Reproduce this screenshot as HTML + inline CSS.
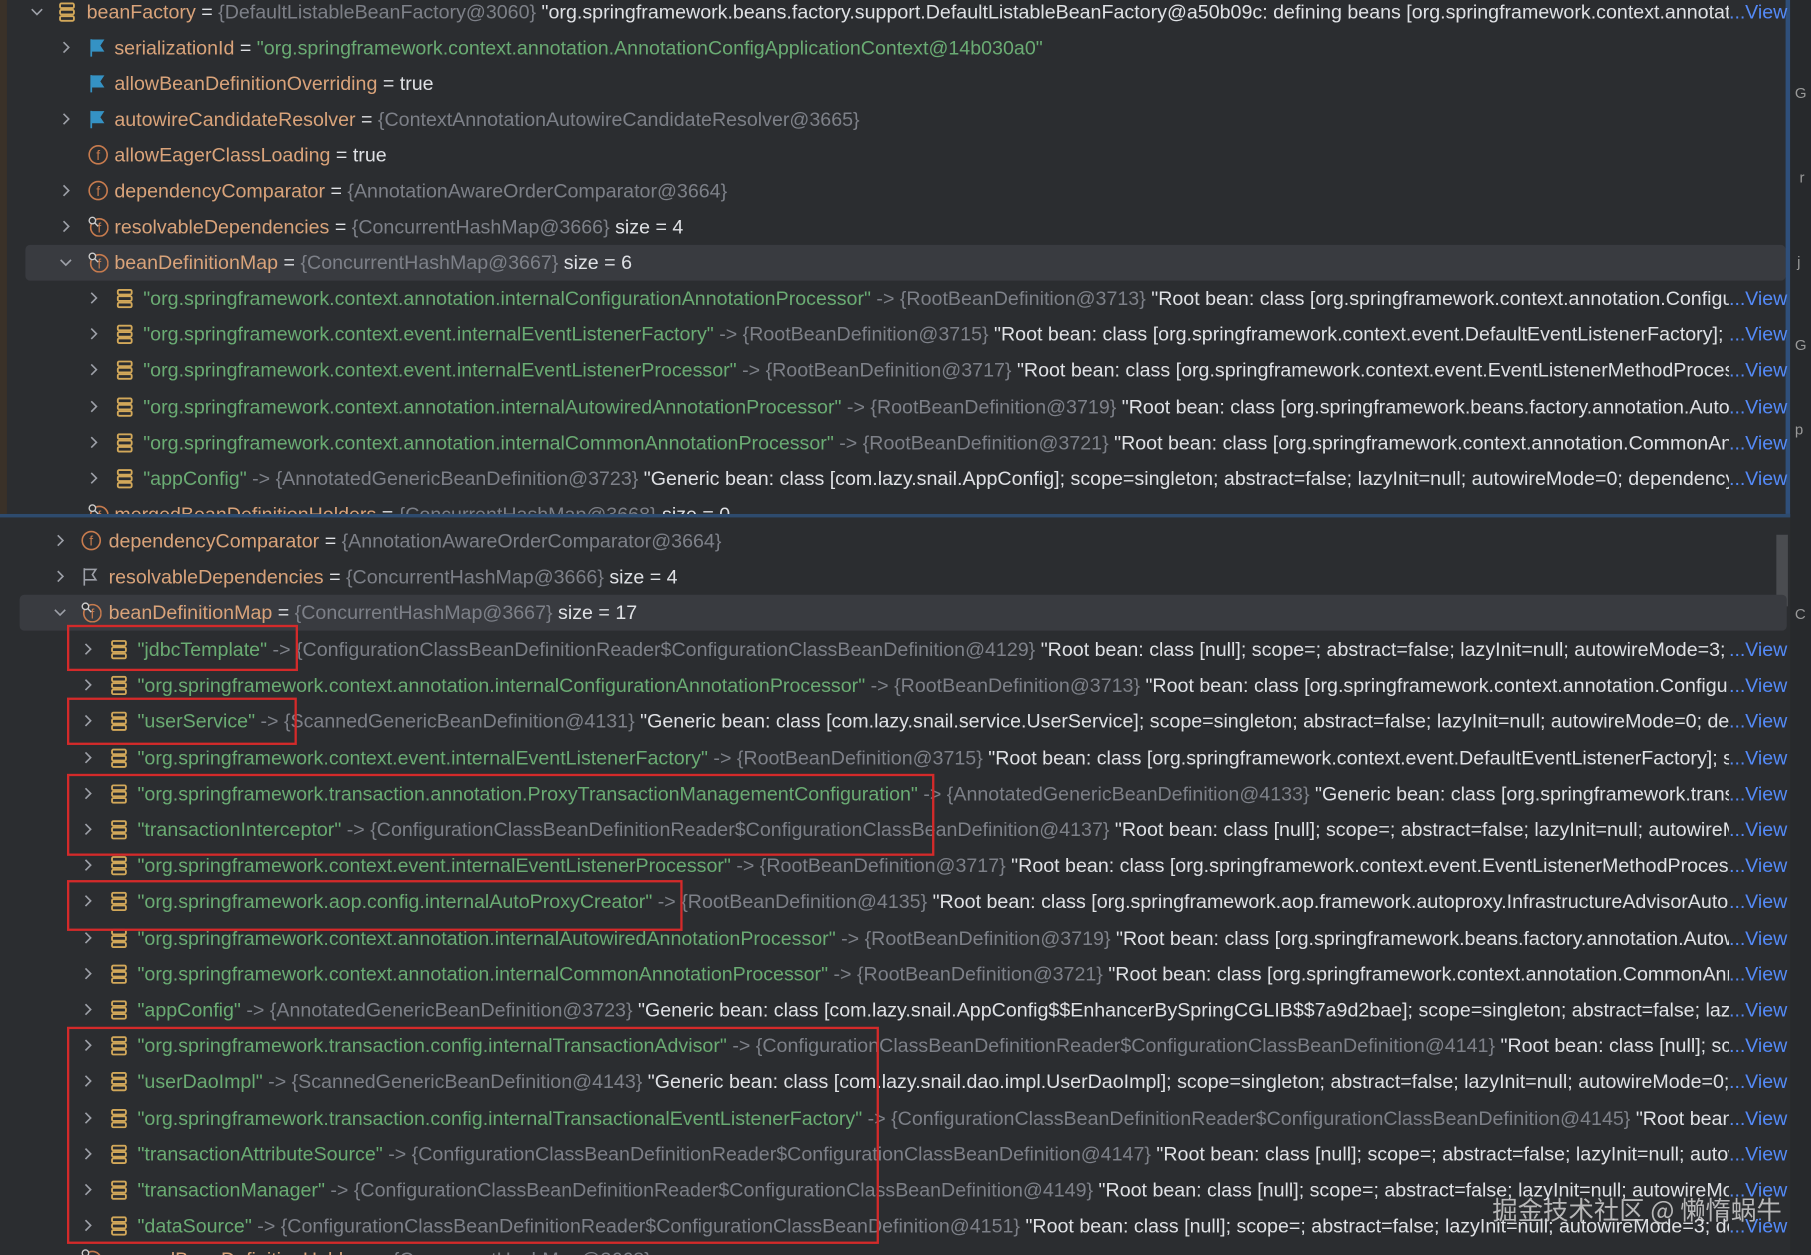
<!DOCTYPE html>
<html><head><meta charset="utf-8"><style>
html,body{margin:0;padding:0;background:#2b2d30;width:1811px;height:1255px;overflow:hidden}
#w{position:absolute;left:0;top:0;width:1568px;height:1087px;transform:scale(1.15497);transform-origin:0 0;font-family:"Liberation Sans","Noto Sans CJK SC",sans-serif;font-size:17px;color:#dfe1e5;background:#2b2d30;overflow:hidden}
.r{position:absolute;height:31px;line-height:31px;white-space:nowrap}
.t{position:absolute;top:0;overflow:hidden;white-space:nowrap}
.n{color:#d9a37a}.g{color:#7d8088}.s{color:#6aab73}.v{color:#548af7}
.ar{position:absolute;top:9px;width:12px;height:12px}
.ic{position:absolute;top:7px;width:16px;height:17px}
.ar svg,.ic svg{display:block;width:100%;height:100%}
.dots{position:absolute;top:0;left:1497px;color:#548af7}
.vw{position:absolute;top:0;left:1511px;color:#548af7}
.sel{position:absolute;background:#393b40;border-radius:4px}
.box{position:absolute;border:2px solid #d42a2a;box-sizing:border-box}
</style></head><body><div id="w">
<div style="position:absolute;left:0;top:0;width:6px;height:447px;background:#3a3128"></div>
<div style="position:absolute;left:1546px;top:0;width:4px;height:447px;background:#2f4f7a"></div>
<div style="position:absolute;left:1550px;top:0;width:18px;height:1087px;background:#27292c"></div>
<div class="sel" style="left:22px;top:212px;width:1524px;height:31px"></div>
<div style="position:absolute;left:0;top:445px;width:1550px;height:642px;background:#2b2d30;border-top:3px solid #2e4b6e"></div>
<div style="position:absolute;left:1538px;top:463px;width:10px;height:62px;background:#4a4c50"></div>
<div class="sel" style="left:17px;top:515px;width:1530px;height:31px"></div>
<div style="position:absolute;left:1554px;top:73px;color:#999;font-size:13px">G</div>
<div style="position:absolute;left:1558px;top:146px;color:#999;font-size:13px">r</div>
<div style="position:absolute;left:1556px;top:219px;color:#999;font-size:13px">j</div>
<div style="position:absolute;left:1554px;top:291px;color:#999;font-size:13px">G</div>
<div style="position:absolute;left:1554px;top:364px;color:#999;font-size:13px">p</div>
<div style="position:absolute;left:1554px;top:524px;color:#999;font-size:13px">C</div>
<div id="rows"></div>
<div class="box" style="left:58px;top:541px;width:200px;height:40px"></div>
<div class="box" style="left:58px;top:604px;width:199px;height:41px"></div>
<div class="box" style="left:58px;top:670px;width:751px;height:71px"></div>
<div class="box" style="left:58px;top:762px;width:533px;height:44px"></div>
<div class="box" style="left:58px;top:889px;width:703px;height:188px"></div>
<div style="position:absolute;left:1292px;top:1031px;font-size:22px;color:#d0d0d0;opacity:.85;font-family:'Noto Sans CJK SC',sans-serif">掘金技术社区 @ 懒惰蜗牛</div>
</div>
<script>
(function(){
var C='<svg viewBox="0 0 12 12"><path d="M4 1.5L8.5 6L4 10.5" fill="none" stroke="#9da0a8" stroke-width="1.4"/></svg>';
var D='<svg viewBox="0 0 12 12"><path d="M1.5 4L6 8.5L10.5 4" fill="none" stroke="#9da0a8" stroke-width="1.4"/></svg>';
var DB='<svg viewBox="0 0 16 17"><g fill="none" stroke="#d2a85a" stroke-width="1.6"><rect x="2" y="1" width="12" height="4" rx="1.2"/><rect x="2" y="6.5" width="12" height="4" rx="1.2"/><rect x="2" y="12" width="12" height="4" rx="1.2"/></g></svg>';
var FL='<svg viewBox="0 0 16 17"><path d="M3 1v15M3 2h10l-3 4.5 3 4.5H3z" fill="#3592c4" stroke="#3592c4" stroke-width="1.5"/></svg>';
var FO='<svg viewBox="0 0 16 17"><path d="M3 1v15M3 2h10l-3 4.5 3 4.5H3z" fill="none" stroke="#9da0a8" stroke-width="1.4"/></svg>';
var F='<svg viewBox="0 0 18 18"><circle cx="9" cy="9" r="7.8" fill="none" stroke="#c77b4e" stroke-width="1.4"/><text x="9" y="13.5" text-anchor="middle" font-size="12" fill="#c77b4e" font-family="Liberation Sans">f</text></svg>';
var FK='<svg viewBox="0 0 18 18"><circle cx="10" cy="10" r="7.5" fill="none" stroke="#c77b4e" stroke-width="1.4"/><text x="10" y="14.5" text-anchor="middle" font-size="12" fill="#c77b4e" font-family="Liberation Sans">f</text><circle cx="4" cy="4" r="2.8" fill="#2b2d30" stroke="#ccc" stroke-width="1.2"/><path d="M6 6l3 3" stroke="#ccc" stroke-width="1.2"/></svg>';
function esc(s){return s.replace(/&/g,'&amp;').replace(/</g,'&lt;').replace(/>/g,'&gt;');}
var out='';
function row(y,ax,ix,tx,arrow,icon,html,view){
 out+='<div class="r" style="left:0;top:'+(y-15)+'px;width:1550px">';
 if(arrow)out+='<div class="ar" style="left:'+(ax-6)+'px">'+arrow+'</div>';
 if(icon)out+='<div class="ic" style="left:'+(ix-8)+'px;'+(icon==F||icon==FK?'width:18px;height:18px;top:6px':'')+'">'+icon+'</div>';
 out+='<div class="t" style="left:'+tx+'px;width:'+((view?1497:1540)-tx)+'px">'+html+'</div>';
 if(view)out+='<div class="dots">...</div><div class="vw">View</div>';
 out+='</div>';
}
function N(s){return '<span class="n">'+esc(s)+'</span>';}
function G(s){return '<span class="g">'+esc(s)+'</span>';}
function S(s){return '<span class="s">'+esc(s)+'</span>';}
function W(s){return esc(s);}
row(10,32,58,75,D,DB,N('beanFactory')+W(' = ')+G('{DefaultListableBeanFactory@3060}')+W(' "org.springframework.beans.factory.support.DefaultListableBeanFactory@a50b09c: defining beans [org.springframework.context.annotation.internal'),1);
row(41,57,84,99,C,FL,N('serializationId')+W(' = ')+S('"org.springframework.context.annotation.AnnotationConfigApplicationContext@14b030a0"'));
row(72,57,84,99,null,FL,N('allowBeanDefinitionOverriding')+W(' = true'));
row(103,57,84,99,C,FL,N('autowireCandidateResolver')+W(' = ')+G('{ContextAnnotationAutowireCandidateResolver@3665}'));
row(134,57,84,99,null,F,N('allowEagerClassLoading')+W(' = true'));
row(165,57,84,99,C,F,N('dependencyComparator')+W(' = ')+G('{AnnotationAwareOrderComparator@3664}'));
row(196,57,84,99,C,FK,N('resolvableDependencies')+W(' = ')+G('{ConcurrentHashMap@3666}')+W('  size = 4'));
row(227,57,84,99,D,FK,N('beanDefinitionMap')+W(' = ')+G('{ConcurrentHashMap@3667}')+W('  size = 6'));
var T=[
['"org.springframework.context.annotation.internalConfigurationAnnotationProcessor"','{RootBeanDefinition@3713}','"Root bean: class [org.springframework.context.annotation.ConfigurationClassPostProcessor]'],
['"org.springframework.context.event.internalEventListenerFactory"','{RootBeanDefinition@3715}','"Root bean: class [org.springframework.context.event.DefaultEventListenerFactory]; scope=; abstract'],
['"org.springframework.context.event.internalEventListenerProcessor"','{RootBeanDefinition@3717}','"Root bean: class [org.springframework.context.event.EventListenerMethodProcessor]; scope'],
['"org.springframework.context.annotation.internalAutowiredAnnotationProcessor"','{RootBeanDefinition@3719}','"Root bean: class [org.springframework.beans.factory.annotation.AutowiredAnnotationBeanPostProcessor]'],
['"org.springframework.context.annotation.internalCommonAnnotationProcessor"','{RootBeanDefinition@3721}','"Root bean: class [org.springframework.context.annotation.CommonAnnotationBeanPostProcessor]'],
['"appConfig"','{AnnotatedGenericBeanDefinition@3723}','"Generic bean: class [com.lazy.snail.AppConfig]; scope=singleton; abstract=false; lazyInit=null; autowireMode=0; dependencyCheck=0']];
T.forEach(function(e,i){row(258+31.2*i,81,108,124,C,DB,S(e[0])+G(' -> '+e[1])+W(' '+e[2]),1);});
row(445,57,84,99,null,FK,N('mergedBeanDefinitionHolders')+W(' = ')+G('{ConcurrentHashMap@3668}')+W('  size = 0'));
var topHtml=out;out='';
row(468,52,78,94,C,F,N('dependencyComparator')+W(' = ')+G('{AnnotationAwareOrderComparator@3664}'));
row(499,52,78,94,C,FO,N('resolvableDependencies')+W(' = ')+G('{ConcurrentHashMap@3666}')+W('  size = 4'));
row(530,52,78,94,D,FK,N('beanDefinitionMap')+W(' = ')+G('{ConcurrentHashMap@3667}')+W('  size = 17'));
var B=[
['"jdbcTemplate"','{ConfigurationClassBeanDefinitionReader$ConfigurationClassBeanDefinition@4129}','"Root bean: class [null]; scope=; abstract=false; lazyInit=null; autowireMode=3; dependencyCheck'],
['"org.springframework.context.annotation.internalConfigurationAnnotationProcessor"','{RootBeanDefinition@3713}','"Root bean: class [org.springframework.context.annotation.ConfigurationClassPostProcessor]'],
['"userService"','{ScannedGenericBeanDefinition@4131}','"Generic bean: class [com.lazy.snail.service.UserService]; scope=singleton; abstract=false; lazyInit=null; autowireMode=0; dependencyCheck'],
['"org.springframework.context.event.internalEventListenerFactory"','{RootBeanDefinition@3715}','"Root bean: class [org.springframework.context.event.DefaultEventListenerFactory]; scope=; abstract'],
['"org.springframework.transaction.annotation.ProxyTransactionManagementConfiguration"','{AnnotatedGenericBeanDefinition@4133}','"Generic bean: class [org.springframework.transaction'],
['"transactionInterceptor"','{ConfigurationClassBeanDefinitionReader$ConfigurationClassBeanDefinition@4137}','"Root bean: class [null]; scope=; abstract=false; lazyInit=null; autowireMode=3'],
['"org.springframework.context.event.internalEventListenerProcessor"','{RootBeanDefinition@3717}','"Root bean: class [org.springframework.context.event.EventListenerMethodProcessor]; scope'],
['"org.springframework.aop.config.internalAutoProxyCreator"','{RootBeanDefinition@4135}','"Root bean: class [org.springframework.aop.framework.autoproxy.InfrastructureAdvisorAutoProxyCreator]'],
['"org.springframework.context.annotation.internalAutowiredAnnotationProcessor"','{RootBeanDefinition@3719}','"Root bean: class [org.springframework.beans.factory.annotation.AutowiredAnnotationBeanPostProcessor]'],
['"org.springframework.context.annotation.internalCommonAnnotationProcessor"','{RootBeanDefinition@3721}','"Root bean: class [org.springframework.context.annotation.CommonAnnotationBeanPostProcessor]'],
['"appConfig"','{AnnotatedGenericBeanDefinition@3723}','"Generic bean: class [com.lazy.snail.AppConfig$$EnhancerBySpringCGLIB$$7a9d2bae]; scope=singleton; abstract=false; lazyInit=null'],
['"org.springframework.transaction.config.internalTransactionAdvisor"','{ConfigurationClassBeanDefinitionReader$ConfigurationClassBeanDefinition@4141}','"Root bean: class [null]; scope=; abstract'],
['"userDaoImpl"','{ScannedGenericBeanDefinition@4143}','"Generic bean: class [com.lazy.snail.dao.impl.UserDaoImpl]; scope=singleton; abstract=false; lazyInit=null; autowireMode=0; dependencyCheck'],
['"org.springframework.transaction.config.internalTransactionalEventListenerFactory"','{ConfigurationClassBeanDefinitionReader$ConfigurationClassBeanDefinition@4145}','"Root bean: class [null]'],
['"transactionAttributeSource"','{ConfigurationClassBeanDefinitionReader$ConfigurationClassBeanDefinition@4147}','"Root bean: class [null]; scope=; abstract=false; lazyInit=null; autowireMode=3'],
['"transactionManager"','{ConfigurationClassBeanDefinitionReader$ConfigurationClassBeanDefinition@4149}','"Root bean: class [null]; scope=; abstract=false; lazyInit=null; autowireMode=3'],
['"dataSource"','{ConfigurationClassBeanDefinitionReader$ConfigurationClassBeanDefinition@4151}','"Root bean: class [null]; scope=; abstract=false; lazyInit=null; autowireMode=3; dependencyCheck']];
B.forEach(function(e,i){row(562+31.2*i,76,103,119,C,DB,S(e[0])+G(' -> '+e[1])+W(' '+e[2]),1);});
row(1090,52,78,94,null,FK,N('mergedBeanDefinitionHolders')+W(' = ')+G('{ConcurrentHashMap@3668}'));
var botHtml=out;
var w=document.getElementById('w');
var d1=document.createElement('div');d1.style.cssText='position:absolute;left:0;top:0;width:1550px;height:445px;overflow:hidden';d1.innerHTML=topHtml;
var d2=document.createElement('div');d2.style.cssText='position:absolute;left:0;top:0;width:1550px;height:1087px;clip-path:inset(448px 0 0 0)';d2.innerHTML=botHtml;
w.insertBefore(d2,document.getElementById('rows'));w.insertBefore(d1,d2);
})();
</script>
</body></html>
